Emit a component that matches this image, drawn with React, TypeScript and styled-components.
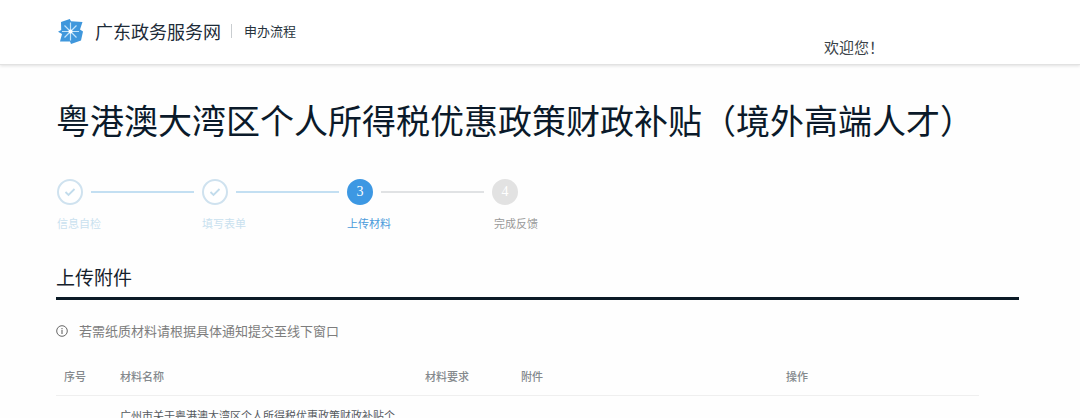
import React from 'react';
import styled, { createGlobalStyle } from 'styled-components';

const GlobalStyle = createGlobalStyle`
  * { box-sizing: border-box; }
  body {
    margin: 0;
    background: #fefefe;
    color: #0b1a2a;
    font-family: "Noto Sans CJK SC", sans-serif;
  }
  h1, h2, p, ol { margin: 0; padding: 0; font-weight: 400; }
`;

const Header = styled.header`
  display: flex;
  align-items: center;
  height: 65px;
  padding: 0 56px 2px 57px;
  background: #fff;
  border-bottom: 1px solid #e2e2e2;
  box-shadow: 0 1px 3px rgba(0, 0, 0, 0.12);
`;

const Brand = styled.a`
  display: flex;
  align-items: center;
  gap: 11px;
  color: #1d2b38;
  font-size: 18px;
  line-height: 24px;
  text-decoration: none;
`;

const Section = styled.span`
  margin-left: 10px;
  padding-left: 12px;
  border-left: 1px solid #c9cdd0;
  color: #26323c;
  font-size: 13px;
  line-height: 14px;
`;

const Welcome = styled.span`
  width: 200px;
  margin-left: auto;
  padding-top: 31px;
  color: #3a4248;
  font-size: 15px;
  line-height: 20px;
`;

const Main = styled.main`
  padding: 35px 61px 0 56px;
`;

const Title = styled.h1`
  color: #0b1a2a;
  font-size: 34px;
  line-height: 40px;
  white-space: nowrap;
`;

const Steps = styled.ol`
  display: flex;
  margin-top: 39px;
  padding-left: 1px;
  list-style: none;
`;

type State = 'done' | 'current' | 'next';

const labelColor = { done: '#c9e1ef', current: '#4a9bdb', next: '#999' };
const ringColor = { done: '#cfe2ef', current: '#3d98e3', next: '#e2e2e2' };
const fillColor = { done: '#fff', current: '#3d98e3', next: '#e2e2e2' };

const StepItem = styled.li`
  width: 145px;
`;

const Track = styled.div`
  display: flex;
  align-items: center;
  gap: 8px;
  padding-right: 8px;
`;

const Circle = styled.span<{ $state: State }>`
  display: flex;
  align-items: center;
  justify-content: center;
  width: 26px;
  height: 26px;
  border: 2px solid ${(p) => ringColor[p.$state]};
  border-radius: 50%;
  background: ${(p) => fillColor[p.$state]};
  color: #fff;
  font-family: "Liberation Serif", serif;
  font-size: 14px;
  line-height: 14px;
`;

const Line = styled.span<{ $state: State }>`
  flex: 1;
  height: 2px;
  background: ${(p) => (p.$state === 'done' ? '#c3dff2' : '#e0e2e4')};
`;

const StepLabel = styled.div<{ $state: State }>`
  margin-top: 10px;
  padding-left: ${(p) => (p.$state === 'next' ? 2 : 0)}px;
  color: ${(p) => labelColor[p.$state]};
  font-size: 11px;
  line-height: 16px;
`;

const Heading = styled.h2`
  margin-top: 34px;
  padding-bottom: 8px;
  border-bottom: 3px solid #0b1a26;
  color: #14202b;
  font-size: 19px;
  line-height: 24px;
`;

const Note = styled.p`
  display: flex;
  align-items: center;
  gap: 11px;
  margin-top: 21px;
  color: #7d7d7d;
  font-size: 13px;
  line-height: 20px;
`;

const TableWrap = styled.div`
  padding-right: 40px;
`;

const Table = styled.table`
  width: 100%;
  margin-top: 16px;
  border-collapse: collapse;
  table-layout: fixed;
  font-size: 11px;
  line-height: 16px;
  text-align: left;
`;

const Col = styled.col<{ $width?: number }>`
  width: ${(p) => (p.$width ? `${p.$width}px` : 'auto')};
`;

const HeadCell = styled.th`
  padding: 11px 8px;
  border-bottom: 1px solid #efefef;
  color: #84898d;
  font-weight: 500;
`;

const Cell = styled.td`
  padding: 11px 8px 0;
  color: #555a5e;
`;

const Logo = () => (
  <svg width="27" height="27" viewBox="0 0 27 27" aria-hidden="true">
    <path
      d="M4 4L12.800 1L14 3.200L25.500 4L23 11.500L26 13.500L24 22.500L14 26L13 23.600L3 23.600L5 16L1 13.800L4.200 12Z"
      fill="#3f97dc"
    />
    <path
      d="M13.500 4.500V22.500M5 13.500H22M7.500 7.500L19.500 19.500M19.500 7.500L7.500 19.500"
      stroke="#c4e4fa"
      strokeWidth="1.200"
    />
    <circle cx="13.500" cy="13.500" r="2" fill="#fff" />
  </svg>
);

const Check = () => (
  <svg width="12" height="10" viewBox="0 0 12 10" fill="none" aria-hidden="true">
    <path d="M1.500 5L4.500 8L10.500 2" stroke="#c2dcec" strokeWidth="1.800" />
  </svg>
);

const Info = () => (
  <svg width="12" height="12" viewBox="0 0 12 12" fill="none" aria-hidden="true">
    <circle cx="6" cy="6" r="5.300" stroke="#666" strokeWidth="1" />
    <path d="M6 5V9M6 3V4.200" stroke="#666" strokeWidth="1.100" />
  </svg>
);

const steps: { label: string; state: State }[] = [
  { label: '信息自检', state: 'done' },
  { label: '填写表单', state: 'done' },
  { label: '上传材料', state: 'current' },
  { label: '完成反馈', state: 'next' },
];

const columns = [
  { name: '序号', width: 56 },
  { name: '材料名称', width: 305 },
  { name: '材料要求', width: 96 },
  { name: '附件', width: 265 },
  { name: '操作' },
];

export default function App() {
  return (
    <>
      <GlobalStyle />
      <Header>
        <Brand href="#">
          <Logo />
          广东政务服务网
        </Brand>
        <Section>申办流程</Section>
        <Welcome>欢迎您！</Welcome>
      </Header>
      <Main>
        <Title>粤港澳大湾区个人所得税优惠政策财政补贴（境外高端人才）</Title>
        <Steps>
          {steps.map(({ label, state }, i) => (
            <StepItem key={label} aria-current={state === 'current' ? 'step' : undefined}>
              <Track>
                <Circle $state={state}>{state === 'done' ? <Check /> : i + 1}</Circle>
                {i < steps.length - 1 && <Line $state={state} />}
              </Track>
              <StepLabel $state={state}>{label}</StepLabel>
            </StepItem>
          ))}
        </Steps>
        <Heading>上传附件</Heading>
        <Note>
          <Info />
          若需纸质材料请根据具体通知提交至线下窗口
        </Note>
        <TableWrap>
          <Table>
            <colgroup>
              {columns.map((c) => (
                <Col key={c.name} $width={c.width} />
              ))}
            </colgroup>
            <thead>
              <tr>
                {columns.map((c) => (
                  <HeadCell key={c.name} scope="col">{c.name}</HeadCell>
                ))}
              </tr>
            </thead>
            <tbody>
              <tr>
                <Cell />
                <Cell>广州市关于粤港澳大湾区个人所得税优惠政策财政补贴个</Cell>
                <Cell />
                <Cell />
                <Cell />
              </tr>
            </tbody>
          </Table>
        </TableWrap>
      </Main>
    </>
  );
}
